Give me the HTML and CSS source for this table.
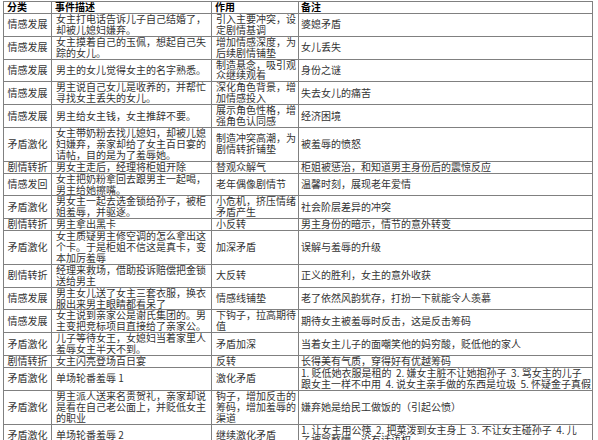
FILE: index.html
```html
<!DOCTYPE html>
<html lang="zh-CN">
<head>
<meta charset="utf-8">
<title>剧情分析表</title>
<link rel="stylesheet" href="styles.css">
</head>
<body>
<table class="sheet">
  <colgroup>
    <col class="c-cat">
    <col class="c-desc">
    <col class="c-role">
    <col class="c-note">
  </colgroup>
  <thead>
    <tr><th>分类</th><th>事件描述</th><th>作用</th><th>备注</th></tr>
  </thead>
  <tbody>
    <tr><td class="cat">情感发展</td><td>女主打电话告诉儿子自己结婚了，却被儿媳妇嫌弃。</td><td>引入主要冲突，设定剧情基调</td><td>婆媳矛盾</td></tr>
    <tr><td class="cat">情感发展</td><td>女主摸着自己的玉佩，想起自己失踪的女儿。</td><td>增加情感深度，为后续剧情铺垫</td><td>女儿丢失</td></tr>
    <tr><td class="cat">情感发展</td><td>男主的女儿觉得女主的名字熟悉。</td><td>制造悬念，吸引观众继续观看</td><td>身份之谜</td></tr>
    <tr><td class="cat">情感发展</td><td>男主说自己女儿是收养的，并帮忙寻找女主丢失的女儿。</td><td>深化角色背景，增加情感投入</td><td>失去女儿的痛苦</td></tr>
    <tr><td class="cat">情感发展</td><td>男主给女主钱，女主推辞不要。</td><td>展示角色性格，增强角色认同感</td><td>经济困境</td></tr>
    <tr><td class="cat">矛盾激化</td><td>女主带奶粉去找儿媳妇，却被儿媳妇嫌弃，亲家却给了女主百日宴的请帖，目的是为了羞辱她。</td><td>制造冲突高潮，为剧情转折铺垫</td><td>被羞辱的愤怒</td></tr>
    <tr><td class="cat">剧情转折</td><td>男女主走后，经理将柜姐开除</td><td>替观众解气</td><td>柜姐被惩治，和知道男主身份后的震惊反应</td></tr>
    <tr><td class="cat">情感发回</td><td>女主把奶粉拿回去跟男主一起喝，男主给她擦嘴。</td><td>老年偶像剧情节</td><td>温馨时刻，展现老年爱情</td></tr>
    <tr><td class="cat">矛盾激化</td><td>男女主一起去选金锁给孙子，被柜姐羞辱，并驱逐。</td><td>小危机，挤压情绪矛盾产生</td><td>社会阶层差异的冲突</td></tr>
    <tr><td class="cat">剧情转折</td><td>男主拿出黑卡</td><td>小反转</td><td>男主身份的暗示，情节的意外转变</td></tr>
    <tr><td class="cat">矛盾激化</td><td>女主质疑男主修空调的怎么拿出这个卡。于是柜姐不信这是真卡，变本加厉羞辱</td><td>加深矛盾</td><td>误解与羞辱的升级</td></tr>
    <tr><td class="cat">剧情转折</td><td>经理来救场，借助投诉赔偿把金锁送给男主</td><td>大反转</td><td>正义的胜利，女主的意外收获</td></tr>
    <tr><td class="cat">情感发展</td><td>男主女儿送了女主三套衣服，换衣服出来男主眼睛都看呆了</td><td>情感线铺垫</td><td>老了依然风韵犹存，打扮一下就能令人羡慕</td></tr>
    <tr><td class="cat">情感发展</td><td>女主说到亲家公是谢氏集团的。男主变把竞标项目直接给了亲家公。</td><td>下钩子，拉高期待值</td><td>期待女主被羞辱时反击，这是反击筹码</td></tr>
    <tr><td class="cat">矛盾激化</td><td>儿子等待女王，女媳妇当着家里人羞辱女主半天不到。</td><td>矛盾加深</td><td>当着女主儿子的面嘲笑他的妈穷酸，贬低他的家人</td></tr>
    <tr><td class="cat">剧情转折</td><td>女主闪亮登场百日宴</td><td>反转</td><td>长得美有气质，穿得好有优越筹码</td></tr>
    <tr><td class="cat">矛盾激化</td><td>单场轮番羞辱 1</td><td>激化矛盾</td><td>1. 贬低她衣服是租的&nbsp; 2. 嫌女主脏不让她抱孙子&nbsp; 3. 骂女主的儿子<br>跟女主一样不中用&nbsp; 4. 说女主亲手做的东西是垃圾&nbsp; 5. 怀疑金子真假</td></tr>
    <tr><td class="cat">矛盾激化</td><td>男主派人送来名贵贺礼，亲家却说是看在自己老公面上，并贬低女主的职业</td><td>钩子，增加反击的筹码，增加羞辱的渠道</td><td>嫌弃她是给民工做饭的（引起公愤）</td></tr>
    <tr><td class="cat">矛盾激化</td><td>单场轮番羞辱 2</td><td>继续激化矛盾</td><td>1. 让女主用公筷&nbsp; 2. 把菜泼到女主身上&nbsp; 3. 不让女主碰孙子&nbsp; 4. 儿<br>子被骂整懵，没有话语权</td></tr>
  </tbody>
</table>
</body>
</html>
```

FILE: styles.css
```css
html, body {
  margin: 0;
  padding: 0;
  background: #ffffff;
}

body {
  font-family: "Noto Sans CJK SC", "Noto Sans", sans-serif;
  font-size: 10px;
  color: #333333;
  overflow: hidden;
}

.sheet {
  border-collapse: collapse;
  table-layout: fixed;
  width: 589px;
  margin: 1px 0 0 3px;
}

.c-cat { width: 48px; }
.c-desc { width: 160px; }
.c-role { width: 87px; }
.c-note { width: 294px; }

.sheet th,
.sheet td {
  border: 1px solid #808080;
  padding: 0 0 0 4px;
  line-height: 10.9px;
  vertical-align: middle;
  text-align: left;
  font-weight: normal;
}

.sheet th {
  font-weight: bold;
  color: #000000;
  padding-left: 3px;
}

.sheet td:last-child,
.sheet th:last-child {
  padding-left: 2px;
}

.sheet .cat {
  text-align: center;
  padding: 0;
}
```
